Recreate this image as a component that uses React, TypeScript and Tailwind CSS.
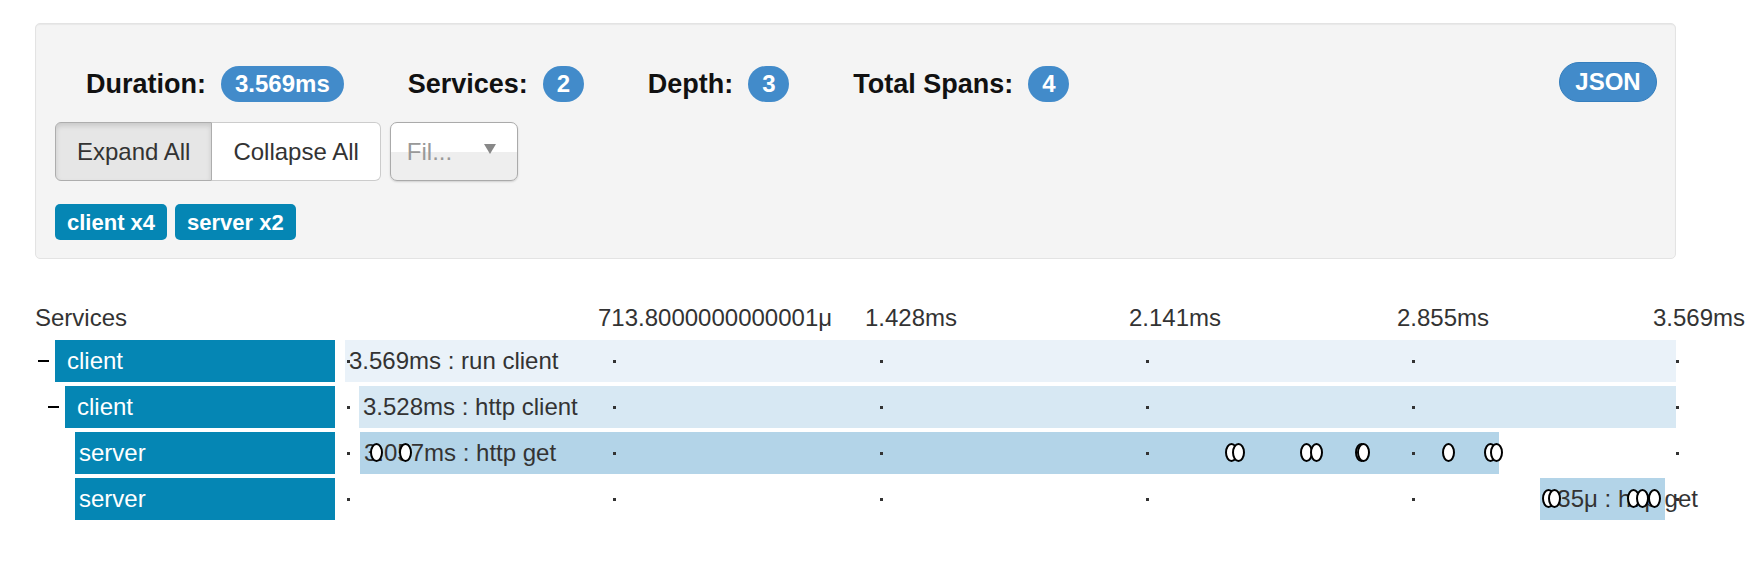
import React from "react";

type Row = {
  service: string;
  indent: string;
  namePad: string;
  toggle: boolean;
  left: number;
  width: number;
  barColor: string;
  label: string;
  marks: number[];
};

// tick positions are relative to the left edge of the timeline column
const TICKS = [3, 269, 536, 802, 1068, 1332];

const TIME_LABELS = [
  { x: 253, text: "713.8000000000001μ" },
  { x: 520, text: "1.428ms" },
  { x: 784, text: "2.141ms" },
  { x: 1052, text: "2.855ms" },
  { x: 1308, text: "3.569ms" },
];

const ROWS: Row[] = [
  {
    service: "client",
    indent: "pl-[3px]",
    namePad: "pl-[12px]",
    toggle: true,
    left: 0,
    width: 1331,
    barColor: "bg-[#eaf2f9]",
    label: "3.569ms : run client",
    marks: [],
  },
  {
    service: "client",
    indent: "pl-[13px]",
    namePad: "pl-[12px]",
    toggle: true,
    left: 14,
    width: 1317,
    barColor: "bg-[#d7e8f3]",
    label: "3.528ms : http client",
    marks: [],
  },
  {
    service: "server",
    indent: "pl-[40px]",
    namePad: "pl-[4px]",
    toggle: false,
    left: 15,
    width: 1139,
    barColor: "bg-[#b3d4e8]",
    label: "3.057ms : http get",
    marks: [31, 60, 886, 893, 961, 971, 1016, 1018, 1103, 1145, 1151],
  },
  {
    service: "server",
    indent: "pl-[40px]",
    namePad: "pl-[4px]",
    toggle: false,
    left: 1195,
    width: 125,
    barColor: "bg-[#b3d4e8]",
    label: "335μ : http get",
    marks: [1203, 1209, 1288, 1297, 1309],
  },
];

const Stat: React.FC<{ label: string; value: string; round?: boolean }> = ({ label, value, round }) => (
  <div className="flex items-center gap-[15px]">
    <span className="text-[27px] font-bold leading-none text-[#111]">{label}</span>
    <span
      className={
        round
          ? "flex h-[36px] w-[41px] items-center justify-center rounded-full bg-[#428bca] text-[24px] font-bold text-white"
          : "flex h-[36px] items-center rounded-full bg-[#428bca] px-[14px] text-[24px] font-bold text-white"
      }
    >
      {value}
    </span>
  </div>
);

export default function App() {
  return (
    <div className="h-[566px] w-[1748px] overflow-hidden bg-white pl-[35px] pt-[23px] font-['Liberation_Sans',Arial,sans-serif] text-[#333]">
      {/* Summary panel */}
      <div className="h-[236px] w-[1641px] rounded-[5px] border border-[#e3e3e3] bg-[#f4f4f4] pl-[19px] pr-[18px] pt-[42px] shadow-[inset_0_1px_1px_rgba(0,0,0,0.05)]">
        <div className="flex h-[36px] items-center">
          <div className="flex items-center gap-[64px] pl-[31px]">
            <Stat label="Duration:" value="3.569ms" />
            <Stat label="Services:" value="2" round />
            <Stat label="Depth:" value="3" round />
            <Stat label="Total Spans:" value="4" round />
          </div>
          <button className="-mt-[4px] ml-auto flex h-[40px] w-[98px] items-center justify-center rounded-full border border-[#357ebd] bg-[#428bca] text-[24px] font-bold text-white">
            JSON
          </button>
        </div>

        <div className="mt-[20px] flex items-center gap-[9px]">
          <div className="flex h-[59px]">
            <button className="h-full rounded-l-[6px] border border-[#adadad] bg-[#e6e6e6] px-[21px] text-[24px] text-[#333] shadow-[inset_0_3px_5px_rgba(0,0,0,0.125)]">
              Expand All
            </button>
            <button className="h-full rounded-r-[6px] border border-l-0 border-[#ccc] bg-white px-[21px] text-[24px] text-[#333]">
              Collapse All
            </button>
          </div>
          <div className="flex h-[59px] w-[128px] items-center rounded-[7px] border border-[#aaa] bg-[linear-gradient(to_bottom,#ffffff_50%,#eeeeee_50%)] pl-[16px] pr-[21px] shadow-[0_1px_2px_rgba(0,0,0,0.15)]">
            <span className="text-[24px] text-[#999]">Fil...</span>
            <svg className="-mt-[5px] ml-auto" width="12" height="10" viewBox="0 0 12 10">
              <polygon points="0,0 12,0 6,10" fill="#888" />
            </svg>
          </div>
        </div>

        <div className="mt-[23px] flex gap-[8px]">
          <span className="flex h-[36px] items-center rounded-[5px] bg-[#0586b4] px-[12px] text-[22px] font-bold text-white">
            client x4
          </span>
          <span className="flex h-[36px] items-center rounded-[5px] bg-[#0586b4] px-[12px] text-[22px] font-bold text-white">
            server x2
          </span>
        </div>
      </div>

      {/* Timeline */}
      <div className="mt-[41px] flex h-[36px] items-center">
        <div className="w-[300px] text-[24px]">Services</div>
        <div className="relative ml-[10px] h-full w-[1331px]">
          {TIME_LABELS.map((t) => (
            <span
              key={t.text}
              className="absolute top-0 flex h-full items-center whitespace-nowrap text-[24px]"
              style={{ left: t.x }}
            >
              {t.text}
            </span>
          ))}
        </div>
      </div>

      {ROWS.map((row, i) => (
        <div key={i} className="mt-[4px] flex h-[42px]">
          <div className={`flex h-full w-[300px] items-center ${row.indent}`}>
            {row.toggle && <span className="mr-[6px] h-[2px] w-[11px] bg-black" />}
            <div className={`flex h-full flex-1 items-center bg-[#0586b4] text-[24px] text-white ${row.namePad}`}>
              {row.service}
            </div>
          </div>
          <div className="relative ml-[10px] h-full w-[1331px]">
            <div className={`absolute top-0 h-full ${row.barColor}`} style={{ left: row.left, width: row.width }}>
              <span className="flex h-full items-center whitespace-nowrap pl-[4px] text-[24px] text-[#333]">
                {row.label}
              </span>
            </div>
            {TICKS.map((x) => (
              <span key={x} className="absolute top-[20px] h-[3px] w-[3px] bg-[#333]" style={{ left: x - 1 }} />
            ))}
            {row.marks.map((x, j) => (
              <span
                key={j}
                className="absolute top-[11px] h-[19px] w-[13px] rounded-[50%] border-2 border-black bg-white"
                style={{ left: x - 6 }}
              />
            ))}
          </div>
        </div>
      ))}
    </div>
  );
}
